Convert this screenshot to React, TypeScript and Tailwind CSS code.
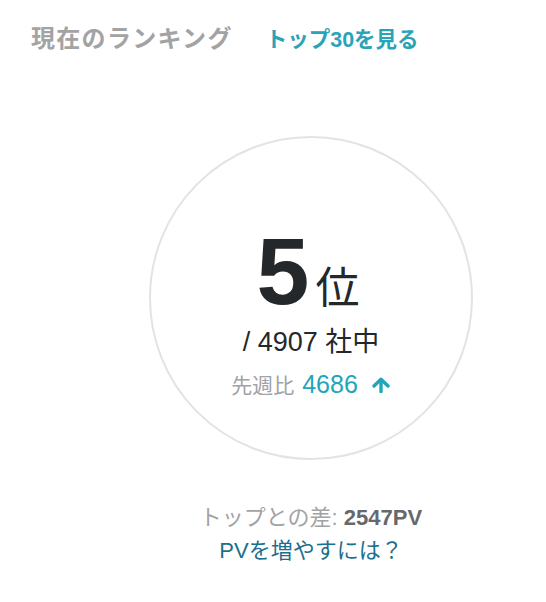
import React from 'react';

const font = { fontFamily: '"Liberation Sans", "Noto Sans CJK JP", sans-serif' };

const ArrowUp = () => (
  <svg viewBox="0 0 20 16" className="w-[20px] h-[16px]" fill="none" stroke="currentColor" strokeWidth={3.4} strokeLinecap="round" strokeLinejoin="round">
    <path d="M10 14.5V3" />
    <path d="M3 9L10 2.2L17 9" />
  </svg>
);

export default function App() {
  return (
    <div className="w-[546px] h-[602px] bg-white" style={font}>
      <div className="flex items-baseline pl-[31px] pt-[23px]">
        <h2 className="text-[24px] font-bold text-[#a3a3a3] leading-[32px] tracking-[1.3px]">現在のランキング</h2>
        <a className="ml-[33px] text-[21.5px] font-bold text-[#2aa3b9] leading-[32px]">トップ30を見る</a>
      </div>

      <div className="flex flex-col items-center pl-[76px] mt-[80px]">
        <div className="w-[324px] h-[324px] rounded-full border-2 border-[#e3e3e3] flex flex-col items-center pt-[86px]">
          <div className="flex items-baseline mr-[6px]">
            <span className="text-[95px] font-bold text-[#25282b] leading-[95px]">5</span>
            <span className="ml-[6px] text-[44px] text-[#25282b] leading-[44px]">位</span>
          </div>
          <div className="mt-[7px] text-[27px] text-[#25282b] leading-[32px]">/ 4907 社中</div>
          <div className="mt-[11px] flex items-baseline">
            <span className="text-[21px] text-[#a0a3a7] leading-[30px]">先週比</span>
            <span className="ml-[8px] text-[25px] text-[#22a5bb] leading-[30px]">4686</span>
            <span className="ml-[13px] text-[#22a5bb] flex"><ArrowUp /></span>
          </div>
        </div>
        <div className="mt-[44px] text-[22px] leading-[28px]">
          <span className="text-[#a3a3a3]">トップとの差: </span>
          <span className="font-bold text-[#66686b]">2547PV</span>
        </div>
        <a className="mt-[5px] text-[22px] leading-[28px] text-[#1c6f8c]">PVを増やすには？</a>
      </div>
    </div>
  );
}
